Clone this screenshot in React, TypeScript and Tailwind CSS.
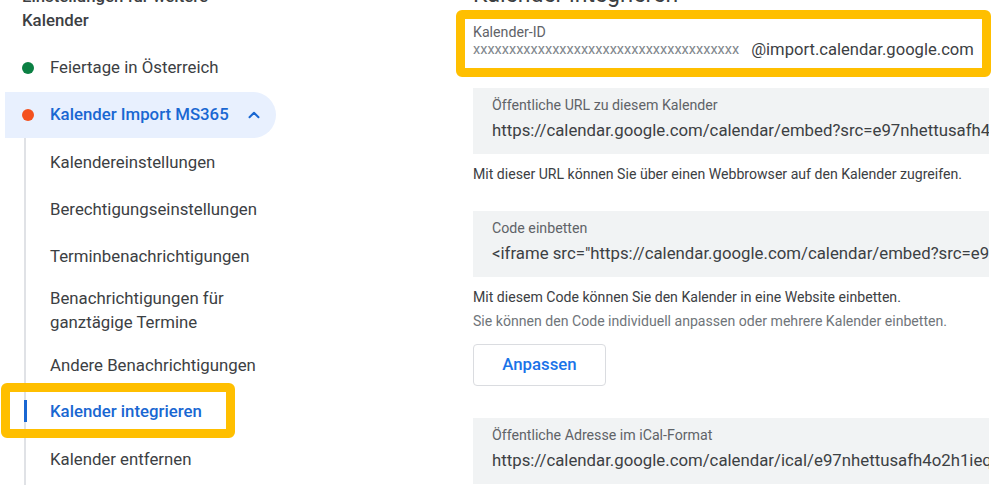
import React from "react";

const SubItem = ({ children, h = "h-[47px]" }: { children: React.ReactNode; h?: string }) => (
  <div className={`${h} flex items-center pl-[24px] text-[16.8px] leading-6 text-[#3c4043] whitespace-nowrap`}>{children}</div>
);

const CopyBox = ({ label, value, className = "" }: { label: string; value: string; className?: string }) => (
  <div className={`ml-[17px] w-[516px] bg-[#f1f3f4] pt-[7px] pb-[9px] pl-[19px] overflow-hidden whitespace-nowrap ${className}`}>
    <div className="text-[14.2px] leading-[20px] text-[#5f6368]">{label}</div>
    <div className="text-[16.8px] leading-[30px] text-[#3c4043]">{value}</div>
  </div>
);

export default function App() {
  return (
    <div className="w-[996px] h-[485px] overflow-hidden bg-white flex font-['Roboto',sans-serif]">
      {/* Sidebar */}
      <aside className="w-[456px] shrink-0 flex flex-col">
        <div className="-mt-[16px] pl-[22px] text-[16.8px] leading-6 font-medium text-[#3c4043] whitespace-nowrap">
          Einstellungen für weitere
          <br />
          Kalender
        </div>
        <div className="mt-[12px] h-[47px] flex items-center pl-[22px]">
          <span className="w-[12px] h-[12px] rounded-full bg-[#0b8043]" />
          <span className="ml-[16px] text-[16.8px] text-[#3c4043]">Feiertage in Österreich</span>
        </div>
        <div className="mt-[1px] ml-[5px] w-[271px] h-[46px] rounded-r-full bg-[#e8f0fe] flex items-center pl-[17px]">
          <span className="w-[12px] h-[12px] rounded-full bg-[#f4511e]" />
          <span className="ml-[16px] text-[16.8px] font-medium text-[#1967d2] whitespace-nowrap">Kalender Import MS365</span>
          <svg className="ml-[16px]" width="18" height="18" viewBox="0 0 24 24" fill="none" stroke="#1967d2" strokeWidth="2.6" strokeLinecap="round" strokeLinejoin="round">
            <path d="M6 15l6-6 6 6" />
          </svg>
        </div>
        <div className="ml-[24px] border-l-2 border-[#e0e2e6] flex flex-col pb-[3px]">
          <SubItem>Kalendereinstellungen</SubItem>
          <SubItem>Berechtigungseinstellungen</SubItem>
          <SubItem>Terminbenachrichtigungen</SubItem>
          <SubItem h="h-[62px]">
            <span>
              Benachrichtigungen für
              <br />
              ganztägige Termine
            </span>
          </SubItem>
          <SubItem>Andere Benachrichtigungen</SubItem>
          <div className="relative h-[47px] flex items-center pl-[24px] text-[16.8px] font-medium text-[#1967d2] whitespace-nowrap">
            <span className="absolute -left-[2px] top-[12px] h-[22px] w-[3px] bg-[#1967d2]" />
            <span className="absolute -left-[25px] -top-[5px] w-[234px] h-[55px] border-[9px] border-[#ffbf00] rounded-[6px]" />
            Kalender integrieren
          </div>
          <SubItem>Kalender entfernen</SubItem>
        </div>
      </aside>

      {/* Main */}
      <main className="flex-1 flex flex-col">
        <div className="-mt-[19px] pl-[17px] text-[23px] leading-[28px] text-[#3c4043] whitespace-nowrap">
          Kalender integrieren
        </div>
        <div className="mt-[1px] w-[535px] h-[67px] border-[9px] border-[#ffbf00] rounded-[6px] pl-[8px] pt-[5px]">
          <div className="text-[14.2px] leading-4 text-[#5f6368]">Kalender-ID</div>
          <div className="flex items-center leading-5 whitespace-nowrap">
            <span className="text-[14.5px] text-[#80868b]">xxxxxxxxxxxxxxxxxxxxxxxxxxxxxxxxxxxxx</span>
            <span className="ml-[12px] text-[16.6px] text-[#3c4043]">@import.calendar.google.com</span>
          </div>
        </div>

        <CopyBox
          className="mt-[11px]"
          label="Öffentliche URL zu diesem Kalender"
          value="https://calendar.google.com/calendar/embed?src=e97nhettusafh4o2h1ieq8v7fkgrbck%40import.calendar.google.com&ctz=Europe%2FVienna"
        />
        <p className="mt-[10px] ml-[17px] text-[14.1px] leading-[20px] text-[#3c4043] whitespace-nowrap">
          Mit dieser URL können Sie über einen Webbrowser auf den Kalender zugreifen.
        </p>

        <CopyBox
          className="mt-[27px]"
          label="Code einbetten"
          value={'<iframe src="https://calendar.google.com/calendar/embed?src=e97nhettusafh4o2h1ieq8v7fkgrbck%40import.calendar.google.com"'}
        />
        <div className="mt-[8px] ml-[17px] text-[14.1px] leading-[24px] whitespace-nowrap">
          <div className="text-[#3c4043]">Mit diesem Code können Sie den Kalender in eine Website einbetten.</div>
          <div className="text-[#70757a]">Sie können den Code individuell anpassen oder mehrere Kalender einbetten.</div>
        </div>
        <button className="mt-[11px] ml-[17px] w-[133px] h-[42px] border border-[#dadce0] rounded-[4px] bg-white text-[16.8px] font-medium text-[#1a73e8] flex items-center justify-center">
          Anpassen
        </button>

        <CopyBox
          className="mt-[32px]"
          label="Öffentliche Adresse im iCal-Format"
          value="https://calendar.google.com/calendar/ical/e97nhettusafh4o2h1ieq8v7fkgrbck%40import.calendar.google.com/public/basic.ics"
        />
      </main>
    </div>
  );
}
